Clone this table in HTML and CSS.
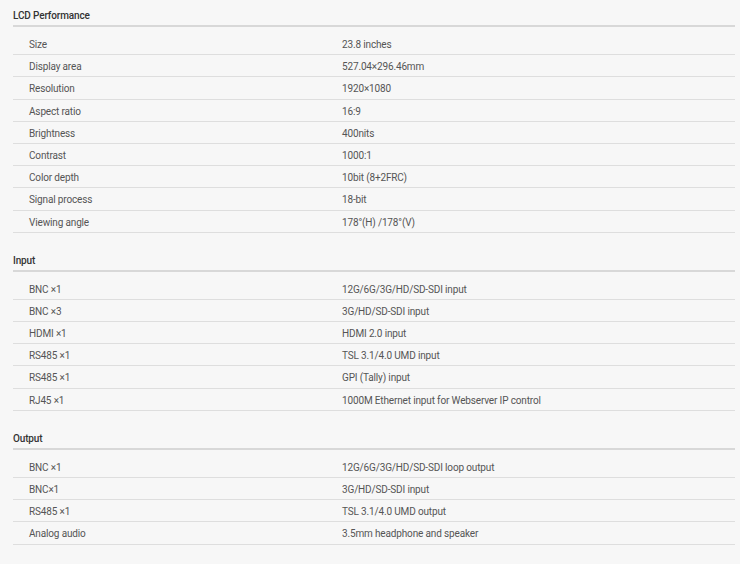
FILE: index.html
```html
<!DOCTYPE html>
<html>
<head>
<meta charset="utf-8">
<link rel="stylesheet" href="styles.css">
</head>
<body>
<div class="specs">
  <section class="group">
    <h2 class="group-title">LCD Performance</h2>
    <ul class="rows">
      <li class="row"><span class="label">Size</span><span class="value">23.8 inches</span></li>
      <li class="row"><span class="label">Display area</span><span class="value">527.04×296.46mm</span></li>
      <li class="row"><span class="label">Resolution</span><span class="value">1920×1080</span></li>
      <li class="row"><span class="label">Aspect ratio</span><span class="value">16:9</span></li>
      <li class="row"><span class="label">Brightness</span><span class="value">400nits</span></li>
      <li class="row"><span class="label">Contrast</span><span class="value">1000:1</span></li>
      <li class="row"><span class="label">Color depth</span><span class="value">10bit (8+2FRC)</span></li>
      <li class="row"><span class="label">Signal process</span><span class="value">18-bit</span></li>
      <li class="row"><span class="label">Viewing angle</span><span class="value">178°(H) /178°(V)</span></li>
    </ul>
  </section>
  <section class="group">
    <h2 class="group-title">Input</h2>
    <ul class="rows">
      <li class="row"><span class="label">BNC ×1</span><span class="value">12G/6G/3G/HD/SD-SDI input</span></li>
      <li class="row"><span class="label">BNC ×3</span><span class="value">3G/HD/SD-SDI input</span></li>
      <li class="row"><span class="label">HDMI ×1</span><span class="value">HDMI 2.0 input</span></li>
      <li class="row"><span class="label">RS485 ×1</span><span class="value">TSL 3.1/4.0 UMD input</span></li>
      <li class="row"><span class="label">RS485 ×1</span><span class="value">GPI (Tally) input</span></li>
      <li class="row"><span class="label">RJ45 ×1</span><span class="value">1000M Ethernet input for Webserver IP control</span></li>
    </ul>
  </section>
  <section class="group">
    <h2 class="group-title">Output</h2>
    <ul class="rows">
      <li class="row"><span class="label">BNC ×1</span><span class="value">12G/6G/3G/HD/SD-SDI loop output</span></li>
      <li class="row"><span class="label">BNC×1</span><span class="value">3G/HD/SD-SDI input</span></li>
      <li class="row"><span class="label">RS485 ×1</span><span class="value">TSL 3.1/4.0 UMD output</span></li>
      <li class="row"><span class="label">Analog audio</span><span class="value">3.5mm headphone and speaker</span></li>
    </ul>
  </section>
</div>
</body>
</html>
```
FILE: styles.css
```css
html, body {
  margin: 0;
  padding: 0;
  background: #f7f7f7;
}
body {
  font-family: Roboto, "Liberation Sans", sans-serif;
  font-size: 10px;
  letter-spacing: -0.15px;
  color: #555;
}
.specs {
  padding: 0 5px 0 13px;
}
.group {
  margin-bottom: 12px;
}
.group-title {
  margin: 0;
  padding: 9px 0 2px;
  line-height: 14px;
  font-size: 10px;
  font-weight: 500;
  color: #333;
  border-bottom: 2px solid #d8d8d8;
}
.rows {
  list-style: none;
  margin: 0;
  padding: 6px 0 0;
}
.row {
  display: grid;
  grid-template-columns: 329px 1fr;
  height: 21.2px;
  line-height: 23px;
  border-bottom: 1px solid #dedede;
}
.label {
  padding-left: 16px;
}
```
